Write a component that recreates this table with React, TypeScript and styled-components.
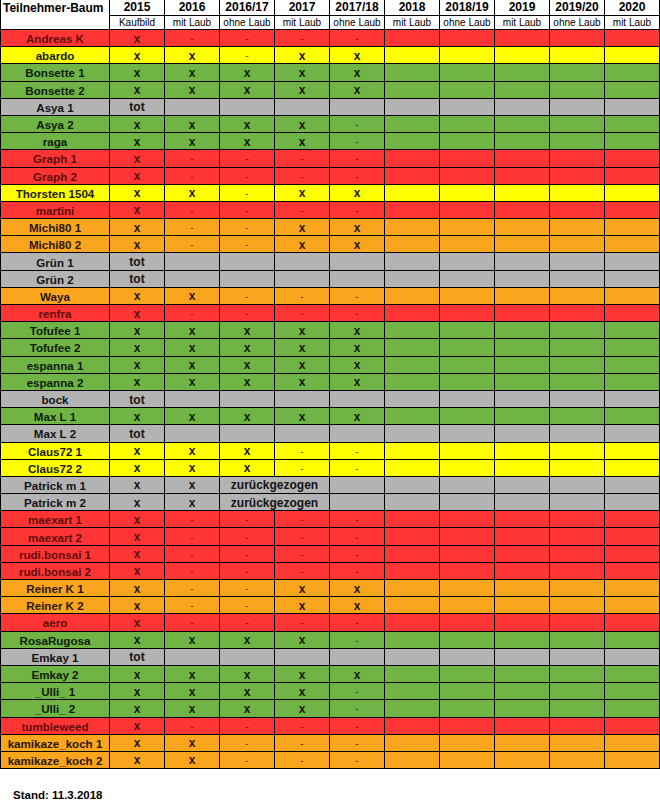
import React from "react";
import styled, { createGlobalStyle } from "styled-components";

type Tone = "red" | "yellow" | "green" | "orange" | "gray";

const tones: Record<Tone, { bg: string; fg: string }> = {
  red: { bg: "#FF3535", fg: "#620b0b" },
  yellow: { bg: "#FFFF00", fg: "#1c1a00" },
  green: { bg: "#70B446", fg: "#0e1c06" },
  orange: { bg: "#F9A51D", fg: "#2a1700" },
  gray: { bg: "#B3B3B3", fg: "#141414" },
};

const COLS = "110px repeat(10, 55px)";

const GlobalStyle = createGlobalStyle`
  *, *::before, *::after { box-sizing: border-box; }
  html, body { margin: 0; padding: 0; background: #fff; overflow: hidden; }
  body { font-family: "Liberation Sans", Arial, sans-serif; color: #111; }
`;

const Sheet = styled.div`
  width: 660px;
`;

const Header = styled.div`
  display: grid;
  grid-template-columns: ${COLS};
  grid-template-rows: 16px 14px;
  background: #fff;
  color: #000;
`;

const HeadName = styled.div`
  grid-row: 1 / span 2;
  border-left: 1px solid #000;
  border-right: 1px solid #000;
  border-bottom: 1px solid #000;
  font-weight: 700;
  font-size: 12px;
  line-height: 14px;
  padding: 1px 0 0 2px;
  white-space: nowrap;
`;

const Year = styled.div`
  border-right: 1px solid #000;
  border-bottom: 1px solid #000;
  font-weight: 700;
  font-size: 12px;
  line-height: 15px;
  text-align: center;
`;

const Sub = styled.div`
  border-right: 1px solid #000;
  border-bottom: 1px solid #000;
  font-size: 10px;
  line-height: 13px;
  text-align: center;
  white-space: nowrap;
`;

const Row = styled.div<{ $tone: Tone }>`
  display: grid;
  grid-template-columns: ${COLS};
  height: 17.2px;
  background: ${(p) => tones[p.$tone].bg};
  color: ${(p) => tones[p.$tone].fg};
`;

const Cell = styled.div<{ $span?: number }>`
  grid-column: span ${(p) => p.$span ?? 1};
  border-right: 1px solid #000;
  border-bottom: 1px solid #000;
  display: flex;
  align-items: center;
  justify-content: center;
  padding-top: 1px;
  font-weight: 700;
  font-size: 12px;
  white-space: nowrap;
  overflow: hidden;
`;

const NameCell = styled(Cell)`
  border-left: 1px solid #000;
  font-size: 11.6px;
`;

const Dash = styled.span`
  font-weight: 400;
  font-size: 10px;
  opacity: 0.75;
`;

const Footer = styled.div`
  padding: 19px 0 0 13px;
  font-weight: 700;
  font-size: 11.5px;
  line-height: 14px;
  color: #000;
`;

const years = [
  ["2015", "Kaufbild"],
  ["2016", "mit Laub"],
  ["2016/17", "ohne Laub"],
  ["2017", "mit Laub"],
  ["2017/18", "ohne Laub"],
  ["2018", "mit Laub"],
  ["2018/19", "ohne Laub"],
  ["2019", "mit Laub"],
  ["2019/20", "ohne Laub"],
  ["2020", "mit Laub"],
];

type Entry = { name: string; tone: Tone; marks: string };

// marks: x = done, - = dash, T = "tot", Z = "zurückgezogen" (after two marks)
const rows: Entry[] = [
  { name: "Andreas K", tone: "red", marks: "x----" },
  { name: "abardo", tone: "yellow", marks: "xx-xx" },
  { name: "Bonsette 1", tone: "green", marks: "xxxxx" },
  { name: "Bonsette 2", tone: "green", marks: "xxxxx" },
  { name: "Asya 1", tone: "gray", marks: "T" },
  { name: "Asya 2", tone: "green", marks: "xxxx-" },
  { name: "raga", tone: "green", marks: "xxxx-" },
  { name: "Graph 1", tone: "red", marks: "x----" },
  { name: "Graph 2", tone: "red", marks: "x----" },
  { name: "Thorsten 1504", tone: "yellow", marks: "xx-xx" },
  { name: "martini", tone: "red", marks: "x----" },
  { name: "Michi80 1", tone: "orange", marks: "x--xx" },
  { name: "Michi80 2", tone: "orange", marks: "x--xx" },
  { name: "Grün 1", tone: "gray", marks: "T" },
  { name: "Grün 2", tone: "gray", marks: "T" },
  { name: "Waya", tone: "orange", marks: "xx---" },
  { name: "renfra", tone: "red", marks: "x----" },
  { name: "Tofufee 1", tone: "green", marks: "xxxxx" },
  { name: "Tofufee 2", tone: "green", marks: "xxxxx" },
  { name: "espanna 1", tone: "green", marks: "xxxxx" },
  { name: "espanna 2", tone: "green", marks: "xxxxx" },
  { name: "bock", tone: "gray", marks: "T" },
  { name: "Max L 1", tone: "green", marks: "xxxxx" },
  { name: "Max L 2", tone: "gray", marks: "T" },
  { name: "Claus72 1", tone: "yellow", marks: "xxx--" },
  { name: "Claus72 2", tone: "yellow", marks: "xxx--" },
  { name: "Patrick m 1", tone: "gray", marks: "xxZ" },
  { name: "Patrick m 2", tone: "gray", marks: "xxZ" },
  { name: "maexart 1", tone: "red", marks: "x----" },
  { name: "maexart 2", tone: "red", marks: "x----" },
  { name: "rudi.bonsai 1", tone: "red", marks: "x----" },
  { name: "rudi.bonsai 2", tone: "red", marks: "x----" },
  { name: "Reiner K 1", tone: "orange", marks: "x--xx" },
  { name: "Reiner K 2", tone: "orange", marks: "x--xx" },
  { name: "aero", tone: "red", marks: "x----" },
  { name: "RosaRugosa", tone: "green", marks: "xxxx-" },
  { name: "Emkay 1", tone: "gray", marks: "T" },
  { name: "Emkay 2", tone: "green", marks: "xxxxx" },
  { name: "_Ulli_ 1", tone: "green", marks: "xxxx-" },
  { name: "_Ulli_ 2", tone: "green", marks: "xxxx-" },
  { name: "tumbleweed", tone: "red", marks: "x----" },
  { name: "kamikaze_koch 1", tone: "orange", marks: "xx---" },
  { name: "kamikaze_koch 2", tone: "orange", marks: "xx---" },
];

function renderCells(marks: string) {
  const cells: React.ReactNode[] = [];
  let used = 0;
  for (const m of marks) {
    if (m === "x") {
      cells.push(<Cell key={used}>x</Cell>);
      used += 1;
    } else if (m === "-") {
      cells.push(
        <Cell key={used}>
          <Dash>-</Dash>
        </Cell>
      );
      used += 1;
    } else if (m === "T") {
      cells.push(<Cell key={used}>tot</Cell>);
      used += 1;
    } else if (m === "Z") {
      cells.push(
        <Cell key={used} $span={2}>
          zurückgezogen
        </Cell>
      );
      used += 2;
    }
  }
  while (used < 10) {
    cells.push(<Cell key={used} />);
    used += 1;
  }
  return cells;
}

export default function App() {
  return (
    <>
      <GlobalStyle />
      <Sheet>
        <Header>
          <HeadName>Teilnehmer-Baum</HeadName>
          {years.map(([y]) => (
            <Year key={y}>{y}</Year>
          ))}
          {years.map(([y, s]) => (
            <Sub key={y + s}>{s}</Sub>
          ))}
        </Header>
        {rows.map((r) => (
          <Row key={r.name} $tone={r.tone}>
            <NameCell>{r.name}</NameCell>
            {renderCells(r.marks)}
          </Row>
        ))}
      </Sheet>
      <Footer>Stand: 11.3.2018</Footer>
    </>
  );
}
